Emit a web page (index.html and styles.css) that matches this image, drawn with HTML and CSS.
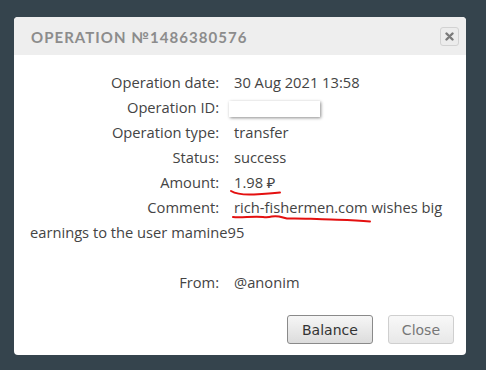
FILE: index.html
```html
<!DOCTYPE html>
<html>
<head>
<meta charset="utf-8">
<link rel="stylesheet" href="styles.css">
</head>
<body>
<div class="dialog">
  <div class="header">
    <div class="title">OPERATION №1486380576</div>
    <button class="x" aria-label="close">
      <svg width="9" height="9" viewBox="0 0 9 9"><path d="M1.5 1.5L7.5 7.5M7.5 1.5L1.5 7.5" stroke="#7a7a7a" stroke-width="2.4" stroke-linecap="round"/></svg>
    </button>
  </div>
  <div class="content">
    <div class="row"><span class="label">Operation date:</span>30 Aug 2021 13:58</div>
    <div class="row"><span class="label">Operation ID:</span><span class="redact"></span></div>
    <div class="row"><span class="label">Operation type:</span>transfer</div>
    <div class="row"><span class="label">Status:</span>success</div>
    <div class="row"><span class="label">Amount:</span><span class="mark">1.98 ₽<svg class="scribble s1" width="52" height="8" viewBox="0 0 52 8"><path d="M1 2 C6 5, 14 6, 24 5.5 S42 4.5, 50 3.5" stroke="#e41010" stroke-width="2" fill="none" stroke-linecap="round"/></svg></span></div>
    <div class="row"><span class="label">Comment:</span><span class="mark">rich-fishermen.com<svg class="scribble s2" width="142" height="10" viewBox="0 0 142 10"><path d="M2 3 C10 4, 22 2, 32 3 S40 1, 48 2.5 S54 5, 60 4.5 S80 5, 100 5.5 S126 6, 139 7.5" stroke="#e41010" stroke-width="2" fill="none" stroke-linecap="round"/></svg></span> wishes big earnings to the user mamine95</div>
    <div class="row blank"></div>
    <div class="row"><span class="label">From:</span>@anonim</div>
  </div>
  <div class="footer">
    <button class="btn primary">Balance</button>
    <button class="btn">Close</button>
  </div>
</div>
</body>
</html>
```
FILE: styles.css
```css
html, body {
  margin: 0;
  padding: 0;
}
body {
  background: #35444d;
  width: 486px;
  height: 370px;
  overflow: hidden;
  font-family: "Open Sans", "Noto Sans", sans-serif;
}
.dialog {
  margin: 17px 0 0 14px;
  width: 452px;
  height: 338px;
  background: #fff;
  border-radius: 4px;
  overflow: hidden;
  display: flex;
  flex-direction: column;
}
.header {
  height: 38px;
  background: #eeeeee;
  display: flex;
  align-items: center;
  justify-content: space-between;
  padding: 0 7px 0 17px;
}
.title {
  font-family: "Lato", sans-serif;
  font-weight: 700;
  font-size: 15px;
  letter-spacing: 1.05px;
  color: #8c8c8c;
  padding-top: 1px;
}
.x {
  width: 19px;
  height: 19px;
  padding: 0;
  border: 1px solid #d2d2d2;
  border-radius: 3px;
  background: #ececec;
  display: flex;
  align-items: center;
  justify-content: center;
}
.content {
  padding: 15px 18px 0 16px;
  font-size: 14.7px;
  line-height: 25px;
  color: #444;
}
.row {
  min-height: 25px;
}
.label {
  display: inline-block;
  width: 189px;
  text-align: right;
  margin-right: 15px;
}
.redact {
  display: inline-block;
  vertical-align: middle;
  width: 91px;
  height: 16px;
  margin-left: -5px;
  background: #fff;
  box-shadow: 1px 1px 3px rgba(0,0,0,0.45);
}
.mark {
  position: relative;
}
.scribble {
  position: absolute;
  left: -4px;
}
.s1 { top: 17px; }
.s2 { top: 17px; left: -3px; }
.footer {
  margin-top: auto;
  display: flex;
  justify-content: flex-end;
  gap: 15px;
  padding: 0 12px 11px 0;
}
.btn {
  height: 29px;
  padding: 0 13px;
  font-family: "DejaVu Sans", sans-serif;
  font-size: 14px;
  color: #777;
  border: 1px solid #cfcfcf;
  border-radius: 3px;
  background: linear-gradient(#f8f8f8, #e8e8e8);
}
.btn.primary {
  color: #333;
  border-color: #8a8a8a;
  background: linear-gradient(#f6f6f6, #dcdcdc);
  padding: 0 14px;
}
```
